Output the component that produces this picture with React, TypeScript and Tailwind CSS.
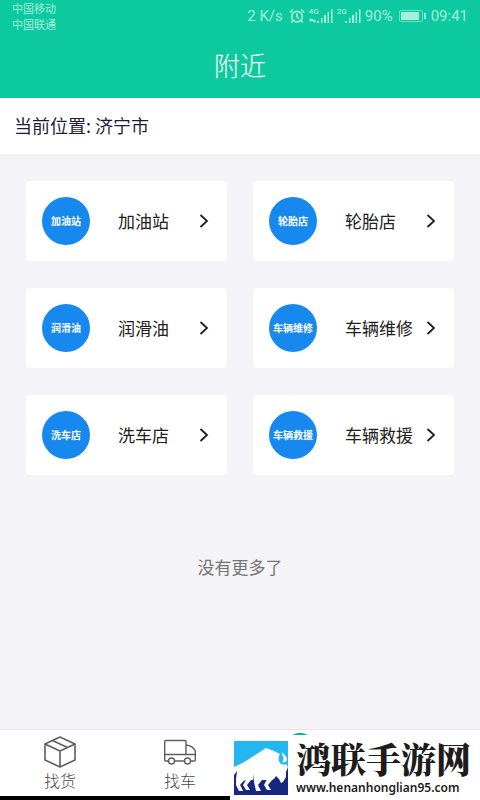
import { AlarmClock } from "lucide-react";

interface Service {
  name: string;
  slug: string;
}

const services: Service[] = [
  { name: "加油站", slug: "gas" },
  { name: "轮胎店", slug: "tire" },
  { name: "润滑油", slug: "oil" },
  { name: "车辆维修", slug: "repair" },
  { name: "洗车店", slug: "wash" },
  { name: "车辆救援", slug: "rescue" },
];

function Signal({ label, data }: { label: string; data?: boolean }) {
  return (
    <span className="relative flex h-4 w-6 items-end justify-end">
      <span className="absolute top-0 left-0 text-[8px] leading-none font-medium">{label}</span>
      <svg width="24" height="16" viewBox="0 0 24 16" fill="currentColor">
        {data && <path d="M0 12l2-2v1h2v2H2v1zM7 13l-2 2v-1H4v-2h1v-1z" />}
        <path d="M8 13h2v2H8zM12 10h1.500v5H12zM15 7h2v8h-2zM18.500 4h1.500v11h-1.500zM22 1h1.500v14H22z" />
      </svg>
    </span>
  );
}

function StatusBar() {
  return (
    <div className="flex h-8 items-center justify-between px-3 text-[#a5efdb]">
      <div className="text-[11px] leading-4">
        <p>中国移动</p>
        <p>中国联通</p>
      </div>
      <div className="flex items-center font-[Roboto,sans-serif] text-[15px] leading-5">
        <span>2 K/s</span>
        <AlarmClock size={16} strokeWidth={2.5} className="mr-1 ml-1.5" />
        <Signal label="4G" data />
        <span className="w-1" />
        <Signal label="2G" />
        <span className="ml-1">90%</span>
        <svg className="mr-1 ml-1.5" width="28" height="14" viewBox="0 0 28 14" fill="none">
          <rect x="0.5" y="1.5" width="23" height="11" rx="1" stroke="currentColor" strokeOpacity="0.6" />
          <rect x="2" y="3" width="18" height="8" fill="currentColor" />
          <path d="M26 4v6" stroke="currentColor" strokeWidth="2" />
        </svg>
        <span>09:41</span>
      </div>
    </div>
  );
}

function ServiceCard({ service }: { service: Service }) {
  return (
    <a href={`#${service.slug}`} className="flex h-20 items-center rounded bg-white pr-[18px] pl-4">
      <span className="flex size-12 shrink-0 items-center justify-center rounded-full bg-[#1789ee] pb-0.5 text-[10px] font-bold whitespace-nowrap text-white">
        {service.name}
      </span>
      <span className="ml-7 flex-1 text-[17px] whitespace-nowrap text-[#202020]">
        {service.name}
      </span>
      <svg width="10" height="14" viewBox="0 0 10 14" fill="none" stroke="#202020" strokeWidth="1.8">
        <path d="M1.500 1L8 7l-6.500 6" />
      </svg>
    </a>
  );
}

function BoxIcon() {
  return (
    <svg width="32" height="32" viewBox="0 0 32 32" fill="none" stroke="#5e5e5e" strokeWidth="1.6" strokeLinejoin="round">
      <path d="M16 1l15 7v16l-15 7-15-7V8z" />
      <path d="M1 8l15 7 15-7M16 15v16M8.500 4.500l15 7" />
    </svg>
  );
}

function TruckIcon() {
  return (
    <svg width="32" height="32" viewBox="0 0 32 32" fill="none" stroke="#5e5e5e" strokeWidth="1.4" strokeLinejoin="round">
      <path d="M4.500 25H1.500a1 1 0 0 1-.8-1V5.500a1 1 0 0 1 1-1H21a1 1 0 0 1 1 1V18.500M10.500 25h10M26.500 25h3.800a1 1 0 0 0 1-1V15c-1.500-3.500-4.500-5.500-9.300-6M1 18.500h30" />
      <circle cx="7.500" cy="25" r="3" />
      <circle cx="23.500" cy="25" r="3" />
    </svg>
  );
}

function BisonLogo() {
  return (
    <svg width="54" height="54" viewBox="0 0 54 54">
      <path d="M0 0h54v54H0z" fill="#24b6ee" />
      <path d="M0 29h48l6-4v29H0z" fill="#16277f" />
      <path
        d="M0 26C7 23 12 20 18 16L32 7l8 3 6 3c-2 3-2 8 1 10 2 1 4 1 5 0l2 3-2 5v5l-3 5-2 1-2-4-3-3-2 3-3 1h-9l-4 5 3 6h-5l-2-9-1-8v6H12l-5 5 2 6H5l-3-6v-6l1-8-3 4z"
        fill="#fff"
      />
      <path d="M48 11c-1 3 3 5 1 9l-1 1c2 1 4 0 5-2 0-4-3-5-5-8z" fill="#fff" />
      <path d="M12 39h5l-4 5 3 5h-4l-3-5zM33 38h6l-5 6 3 5h-4l-3-5z" fill="#fff" />
      <path d="M10 39.500h1.500L8 44l3 5H9l-3-5zM30.500 39.500H32L29 44l3 5h-2l-3-5z" fill="#16277f" />
    </svg>
  );
}

export default function App() {
  return (
    <div className="relative flex min-h-screen flex-col bg-[#f4f3f7] font-['Noto_Sans_CJK_SC',sans-serif]">
      <header className="bg-[#0dc99f]">
        <StatusBar />
        <h1 className="pt-3.5 pb-3.5 text-center text-[26px] leading-[38px] font-light text-white">附近</h1>
      </header>

      <p className="h-14 bg-white px-3.5 text-[18px] leading-[54px] text-[#1f1a3a]">当前位置: 济宁市</p>

      <main className="flex-1 px-[26px] pt-[27px]">
        <div className="grid grid-cols-2 gap-x-[26px] gap-y-[27px]">
          {services.map((s) => (
            <ServiceCard key={s.slug} service={s} />
          ))}
        </div>
        <p className="pt-20 text-center text-[17px] leading-6 text-[#757575]">没有更多了</p>
      </main>

      <nav className="grid h-[71px] grid-cols-4 border-t border-b-4 border-t-[#e8e8ea] border-b-black bg-white text-[16px] leading-5 font-light text-[#4a4a4a]">
        <a href="#goods" className="flex flex-col items-center gap-0.5 pt-1.5">
          <BoxIcon />
          找货
        </a>
        <a href="#trucks" className="flex flex-col items-center gap-0.5 pt-1.5">
          <TruckIcon />
          找车
        </a>
        <span className="flex justify-center pt-[3px]">
          <svg width="32" height="32" viewBox="0 0 32 32" fill="none" stroke="#0fa9a0" strokeWidth="2">
            <circle cx="16" cy="16" r="15" />
          </svg>
        </span>
      </nav>

      {/* Site badge over the tab bar */}
      <div className="absolute right-0 bottom-0 flex h-[65px] w-[250px] items-center gap-2 bg-white pl-1">
        <BisonLogo />
        <div className="whitespace-nowrap text-[#1c1c1c]">
          <p className="font-['Noto_Serif_CJK_SC','Noto_Sans_CJK_SC',serif] text-[35px] leading-9 font-black">鸿联手游网</p>
          <p className="pt-1 font-['Noto_Sans',sans-serif] text-[12px] leading-4 font-semibold">www.henanhonglian95.com</p>
        </div>
      </div>
    </div>
  );
}
